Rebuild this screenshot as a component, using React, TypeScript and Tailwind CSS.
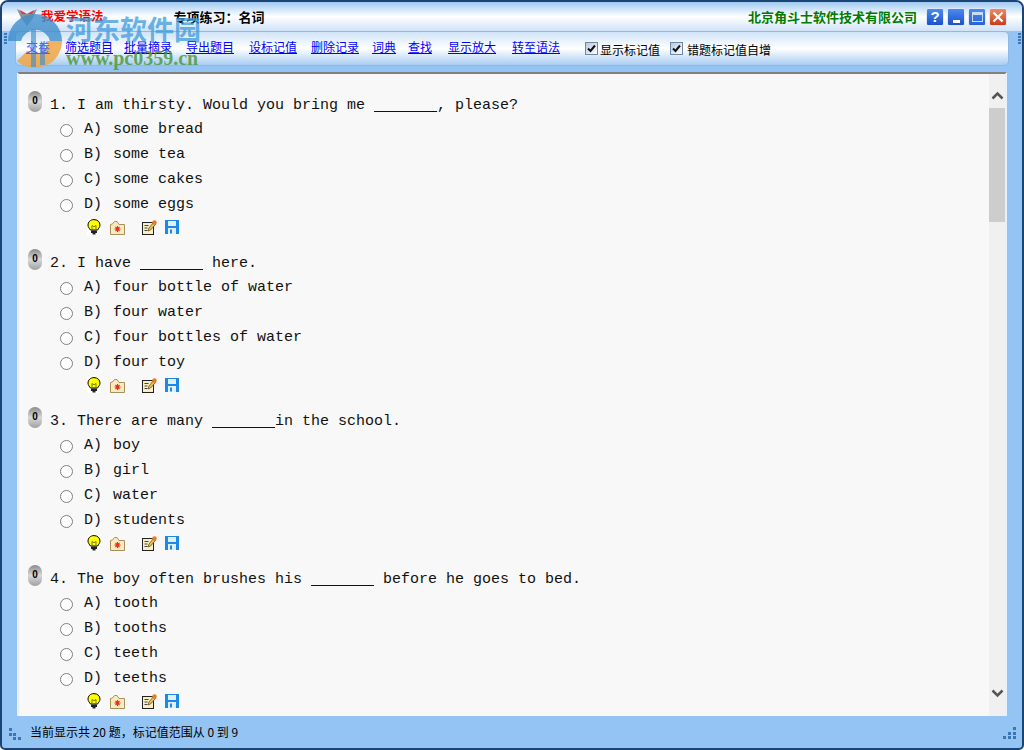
import React from 'react'

const cjk = "font-['Noto_Sans_CJK_SC',sans-serif]"

interface Question {
  title: React.ReactNode
  options: string[]
}

const blank = <span className="underline decoration-1 underline-offset-[2px]">{'\u00a0\u00a0\u00a0\u00a0\u00a0\u00a0\u00a0'}</span>

const questions: Question[] = [
  {
    title: <>1. I am thirsty. Would you bring me {blank}, please?</>,
    options: ['some bread', 'some tea', 'some cakes', 'some eggs'],
  },
  {
    title: <>2. I have {blank} here.</>,
    options: ['four bottle of water', 'four water', 'four bottles of water', 'four toy'],
  },
  {
    title: <>3. There are many {blank}in the school.</>,
    options: ['boy', 'girl', 'water', 'students'],
  },
  {
    title: <>4. The boy often brushes his {blank} before he goes to bed.</>,
    options: ['tooth', 'tooths', 'teeth', 'teeths'],
  },
]

const links = [
  { label: '交卷', cls: 'relative z-10 ml-[10px] w-[24px] text-[#5a5af0]' },
  { label: '筛选题目', cls: 'ml-[15px] w-[48px] text-[#0000ff]' },
  { label: '批量摘录', cls: 'ml-[11px] w-[48px] text-[#0000ff]' },
  { label: '导出题目', cls: 'ml-[14px] w-[48px] text-[#0000ff]' },
  { label: '设标记值', cls: 'ml-[15px] w-[48px] text-[#0000ff]' },
  { label: '删除记录', cls: 'ml-[14px] w-[49px] text-[#0000ff]' },
  { label: '词典', cls: 'ml-[12px] w-[24px] text-[#0000ff]' },
  { label: '查找', cls: 'ml-[12px] w-[24px] text-[#0000ff]' },
  { label: '显示放大', cls: 'ml-[16px] w-[48px] text-[#0000ff]' },
  { label: '转至语法', cls: 'ml-[16px] w-[48px] text-[#0000ff]' },
]

function Bulb() {
  return (
    <svg width="14" height="16" viewBox="0 0 14 16" className="bg-white">
      <path d="M7 .6C3.400.6 1 3 1 6c0 2.300 1.500 3.400 2.400 5h7.200C11.500 9.400 13 8.300 13 6 13 3 10.600.6 7 .6z" fill="#ffff00" stroke="#000" />
      <path d="M5 11V6.500l2 1.200 2-1.200V11" fill="none" stroke="#7a7a00" />
      <path d="M4 11.500h6v2.500H8.500v1.500h-3V14H4z" fill="#222" />
    </svg>
  )
}

function FolderIcon() {
  return (
    <svg width="15" height="14" viewBox="0 0 15 14">
      <path d="M.5 13.500V3.500l2-.5 2-2.500h2.500l2 3h5.500v10z" fill="#fbe9c0" stroke="#a8905a" />
      <path d="M7.500 5v6M4.500 8h6M5.500 6l4 4M9.500 6l-4 4" stroke="#e8301c" strokeWidth="1.100" />
    </svg>
  )
}

function NoteIcon() {
  return (
    <svg width="15" height="15" viewBox="0 0 15 15">
      <rect x="0.500" y="2.500" width="11" height="12" fill="#f8efc4" stroke="#222" />
      <path d="M2.500 5.500h4M2.500 8h3M2.500 10.500h3" stroke="#444" />
      <path d="M6 11l1-3 4.500-5.500 2 2-5 5.500z" fill="#e8c060" stroke="#5a4010" strokeWidth=".7" />
      <circle cx="12.500" cy="2.500" r="2.200" fill="#e87a20" />
    </svg>
  )
}

function SaveIcon() {
  return (
    <svg width="14" height="14" viewBox="0 0 14 14">
      <rect width="14" height="14" fill="#1e88e5" />
      <rect x="3" y="1" width="8" height="5" fill="#dff0fc" />
      <rect x="3" y="8" width="8" height="6" fill="#dff0fc" />
      <rect x="5" y="9.500" width="2" height="4" fill="#1e88e5" />
    </svg>
  )
}

function Check({ className }: { className: string }) {
  return (
    <span className={`flex h-[13px] w-[13px] items-center justify-center border border-[#7088a8] bg-gradient-to-br from-[#b8c8e0] to-white ${className}`}>
      <svg width="9" height="9" viewBox="0 0 9 9">
        <path d="M1 4.500l2.500 2.500L8 1.500" fill="none" stroke="#111" strokeWidth="2" />
      </svg>
    </span>
  )
}

function WinButton({ bg, children, className }: { bg: string; children: React.ReactNode; className: string }) {
  return (
    <div className={`flex h-[18px] w-[18px] items-center justify-center rounded-[2px] border border-[#dbe8f8] ${bg} ${className}`}>
      {children}
    </div>
  )
}

function Grip({ className, flip }: { className: string; flip?: boolean }) {
  return (
    <svg width="14" height="14" viewBox="0 0 14 14" className={className}>
      <path
        d={flip
          ? 'M10 1h3v3h-3zM5 6h3v3H5zM10 6h3v3h-3zM0 10h3v3H0zM5 10h3v3H5zM10 10h3v3h-3z'
          : 'M1 1h3v3H1zM1 6h3v3H1zM5 6h3v3H5zM5 10h3v3H5zM10 10h3v3h-3z'}
        fill="#3a76b4"
      />
    </svg>
  )
}

function QuestionBlock({ q }: { q: Question }) {
  return (
    <div className="mb-[16px]">
      <div className="flex h-[24px] items-center">
        <div className="ml-[9px] -mt-[3px] flex h-[21px] w-[14px] self-start items-center justify-center rounded-[7px] bg-gradient-to-b from-[#8c8c8c] via-[#d8d8d8] to-[#a0a0a0] pb-[3px] font-['Liberation_Sans',sans-serif] text-[10px] font-bold text-black">
          0
        </div>
        <div className="ml-[8px] whitespace-pre">{q.title}</div>
      </div>
      {q.options.map((o, i) => (
        <div key={o} className="flex h-[25px] items-center">
          <span className="ml-[41px] h-[13px] w-[13px] rounded-full border border-[#808080] bg-white" />
          <span className="ml-[11px] whitespace-pre">{'ABCD'[i]}){' '}<span className="ml-[2px]">{o}</span></span>
        </div>
      ))}
      <div className="flex h-[18px] items-center">
        <div className="ml-[68px] flex w-[14px]"><Bulb /></div>
        <div className="ml-[9px] mt-[2px] flex w-[15px]"><FolderIcon /></div>
        <div className="ml-[17px] flex w-[15px]"><NoteIcon /></div>
        <div className="ml-[8px] flex w-[14px]"><SaveIcon /></div>
      </div>
    </div>
  )
}

export default function App() {
  return (
    <div className={`relative flex h-[750px] w-[1024px] flex-col overflow-hidden rounded-t-[8px] rounded-b-[5px] border-[2px] border-[#1a4474] bg-[#93c4f3] ${cjk}`}>
      {/* Title bar */}
      <div className="flex h-[29px] shrink-0 items-center bg-gradient-to-b from-[#9fc9f2] via-white to-[#cfe2f8]">
        <span className="ml-[39px] text-[12.5px] font-bold text-[#ff0000]">我爱学语法</span>
        <span className="ml-[70px] text-[13px] font-bold text-black">专项练习：名词</span>
        <span className="ml-auto text-[13px] font-bold text-[#007a00]">北京角斗士软件技术有限公司</span>
        <WinButton bg="bg-gradient-to-b from-[#4c8cf0] to-[#1c50c8]" className="ml-[9px]">
          <span className="font-['Liberation_Sans',sans-serif] text-[15px] leading-none font-bold text-white">?</span>
        </WinButton>
        <WinButton bg="bg-gradient-to-b from-[#4c8cf0] to-[#1c50c8]" className="ml-[3px]">
          <span className="mt-[9px] h-[3px] w-[7px] bg-white" />
        </WinButton>
        <WinButton bg="bg-gradient-to-b from-[#4c8cf0] to-[#2a62d8]" className="ml-[3px]">
          <span className="h-[10px] w-[11px] border border-t-[3px] border-[#c8dcfa]" />
        </WinButton>
        <WinButton bg="bg-gradient-to-b from-[#f08a60] to-[#c83c18]" className="ml-[3px] mr-[15px]">
          <svg width="12" height="12" viewBox="0 0 12 12">
            <path d="M1.500 1.500l9 9M10.500 1.500l-9 9" stroke="#fff" strokeWidth="2.200" />
          </svg>
        </WinButton>
      </div>

      {/* Toolbar */}
      <div className="mx-[13px] flex h-[35px] shrink-0 items-center rounded-[5px] border border-[#8fb8e4] bg-gradient-to-b from-[#cfe3f8] via-white to-[#a9cdf2] text-[12px]">
        {links.map((l) => (
          <a key={l.label} className={`whitespace-nowrap underline -mt-[3px] ${l.cls}`}>
            {l.label}
          </a>
        ))}
        <Check className="ml-[25px]" />
        <span className="ml-[2px] mt-[3px] text-black">显示标记值</span>
        <Check className="ml-[10px]" />
        <span className="ml-[4px] mt-[3px] text-black">错题标记值自增</span>
      </div>

      {/* Question list */}
      <div className="mx-[15px] mt-[6px] flex min-h-0 flex-1 border-t-2 border-l-2 border-r-2 border-t-[#808080] border-l-[#e8f1fb] border-r-[#e8f1fb] bg-[#f8f8f8]">
        <div className="min-w-0 flex-1 overflow-hidden pt-[20px] font-['Liberation_Mono',monospace] text-[15px] text-[#111]">
          {questions.map((q, i) => (
            <QuestionBlock key={i} q={q} />
          ))}
        </div>
        <div className="flex w-[16px] shrink-0 flex-col items-center bg-[#f0f0f0]">
          <svg width="13" height="9" viewBox="0 0 13 9" className="mt-[17px]">
            <path d="M1.500 7.500l5-5 5 5" fill="none" stroke="#555" strokeWidth="2.500" />
          </svg>
          <div className="mt-[8px] h-[114px] w-full bg-[#cdcdcd]" />
          <svg width="13" height="9" viewBox="0 0 13 9" className="mt-auto mb-[18px]">
            <path d="M1.500 1.500l5 5 5-5" fill="none" stroke="#555" strokeWidth="2.500" />
          </svg>
        </div>
      </div>

      {/* Status bar */}
      <div className="flex h-[32px] shrink-0 items-center text-[12px] text-black">
        <Grip className="ml-[6px] mt-[3px]" />
        <span className="ml-[8px]">当前显示共 20 题，标记值范围从 0 到 9</span>
        <Grip flip className="ml-auto mr-[5px] mt-[2px]" />
      </div>

      {/* Side grips */}
      <div className="absolute left-[2px] top-[31px] h-[12px] w-[3px] bg-[repeating-linear-gradient(to_bottom,#3a76b4_0,#3a76b4_2px,transparent_2px,transparent_3px)]" />
      <div className="absolute right-[1px] top-[31px] h-[12px] w-[3px] bg-[repeating-linear-gradient(to_bottom,#3a76b4_0,#3a76b4_2px,transparent_2px,transparent_3px)]" />

      {/* App icon */}
      <svg width="20" height="18" viewBox="0 0 20 18" className="absolute left-[15px] top-[7px]">
        <path d="M0 0l10 5 10-5-4 9-6 8-6-8z" fill="#8f8f98" />
        <path d="M3 1l7 4 7-4-2 4H5z" fill="#e8383c" />
      </svg>

      {/* Watermark */}
      <svg width="56" height="56" viewBox="0 0 56 56" className="absolute left-[5px] top-[11px]">
        <path d="M55 28A27 27 0 0 1 10 48L20 38A13 13 0 0 0 41 28z" fill="#f0a645" opacity=".85" />
        <path d="M1 28A27 27 0 0 1 55 28H43A15 15 0 0 0 14 28z" fill="#3f8fcc" opacity=".8" />
        <path d="M24 16h5v38h-5zM33 30h5v22h-5z" fill="#3f8fcc" opacity=".65" />
      </svg>
      <div className="absolute left-[64px] top-[9px] text-[27px] leading-[36px] font-bold text-[#3f9bdc]/75">河东软件园</div>
      <div className="absolute left-[64px] top-[45px] font-['Liberation_Serif',serif] text-[20px] leading-[22px] font-bold text-[#4f9a3c]/85">www.pc0359.cn</div>
    </div>
  )
}
